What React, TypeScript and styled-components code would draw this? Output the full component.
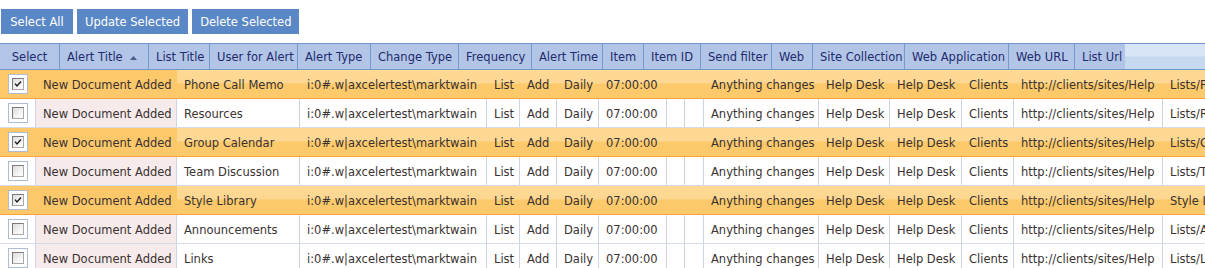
import React from 'react';
import styled, { createGlobalStyle } from 'styled-components';

const GlobalStyle = createGlobalStyle`
  html, body {
    margin: 0;
    padding: 0;
    background: #ffffff;
    overflow: hidden;
  }
  body {
    font-family: 'DejaVu Sans', Verdana, sans-serif;
    font-size: 11.5px;
  }
`;

const HEADER_COLUMNS = '60px 89px 61px 88px 73px 88px 73px 71px 41px 57px 71px 41px 92px 104px 66px 50px 1fr';
const BODY_COLUMNS = '36px 141px 123px 187px 33px 37px 42px 68px 18px 19px 115px 71px 72px 52px 149px 220px';

const Page = styled.div`
  width: 1205px;
  overflow: hidden;
`;

const Toolbar = styled.div`
  display: flex;
  gap: 4px;
  padding: 9px 0 0 1px;
  margin-bottom: 9px;
`;

const ActionButton = styled.button`
  height: 25px;
  min-width: 72px;
  padding: 0 8px;
  border: none;
  background: #5a88c6;
  color: #ffffff;
  font-family: inherit;
  font-size: 11.5px;
  cursor: pointer;
`;

const HeaderBar = styled.div`
  display: grid;
  grid-template-columns: ${HEADER_COLUMNS};
  height: 27px;
  box-sizing: border-box;
  border-top: 1px solid #7396c9;
  border-bottom: 1px solid #7396c9;
`;

const HeaderCell = styled.div<{ $center?: boolean; $last?: boolean }>`
  display: flex;
  align-items: center;
  justify-content: ${p => (p.$center ? 'center' : 'flex-start')};
  gap: 7px;
  padding: ${p => (p.$center ? '1px 0 0 0' : '1px 0 0 7px')};
  background: #b2c5e6;
  border-right: ${p => (p.$last ? 'none' : '1px solid #7698ca')};
  color: #1f2b6e;
  white-space: nowrap;
  overflow: hidden;
`;

const HeaderFiller = styled.div`
  background: linear-gradient(#d8e5f5 0, #d6e4f5 48%, #c7d9ef 52%, #c7d9ef 100%);
`;

const SortArrow = () => (
  <svg width="7" height="4" viewBox="0 0 7 4" style={{ marginTop: 2 }}>
    <polygon points="0,4 3.5,0 7,4" fill="#4c5c8c" />
  </svg>
);

const Cell = styled.div<{ $sorted?: boolean; $center?: boolean }>`
  display: flex;
  align-items: center;
  justify-content: ${p => (p.$center ? 'center' : 'flex-start')};
  padding: ${p => (p.$center ? '0' : '2px 0 0 7px')};
  border-right: 1px solid #cdd5e4;
  background: ${p => (p.$sorted ? '#f6eaea' : 'transparent')};
  white-space: nowrap;
  overflow: hidden;
`;

const Row = styled.div<{ $selected?: boolean }>`
  display: grid;
  grid-template-columns: ${BODY_COLUMNS};
  height: 29px;
  box-sizing: border-box;
  color: #3a3232;
  border-bottom: 1px solid ${p => (p.$selected ? '#f7a33d' : '#d5dce8')};
  background: ${p =>
    p.$selected
      ? 'linear-gradient(#fed994 0, #fed892 46%, #fdca6b 50%, #fdc96a 100%)'
      : '#ffffff'};

  ${Cell} {
    border-right-color: ${p => (p.$selected ? 'transparent' : '#cdd5e4')};
  }
  ${p =>
    p.$selected &&
    `
    & > div:nth-child(1), & > div:nth-child(2) {
      background: #fdc86a;
    }
  `}
`;

const CheckFrame = styled.span`
  display: flex;
  align-items: center;
  justify-content: center;
  width: 20px;
  height: 20px;
  box-sizing: border-box;
  border: 1px solid #aebbd2;
  background: #ffffff;
  margin-top: -1px;
`;

const CheckBox = styled.span`
  display: flex;
  align-items: center;
  justify-content: center;
  width: 12px;
  height: 12px;
  box-sizing: border-box;
  border: 1px solid #7a7a7a;
  border-right-color: #a9a9a9;
  border-bottom-color: #a9a9a9;
  background: linear-gradient(135deg, #dcdcdc 0%, #f4f4f4 60%, #ffffff 100%);
`;

const Check = ({ checked }: { checked: boolean }) => (
  <CheckFrame>
    <CheckBox>
      {checked && (
        <svg width="8" height="8" viewBox="0 0 8 8">
          <polyline points="1,3.6 3,6 7,1.5" fill="none" stroke="#1c1c1c" strokeWidth="1.4" />
        </svg>
      )}
    </CheckBox>
  </CheckFrame>
);

const headers = [
  'Select',
  'Alert Title',
  'List Title',
  'User for Alert',
  'Alert Type',
  'Change Type',
  'Frequency',
  'Alert Time',
  'Item',
  'Item ID',
  'Send filter',
  'Web',
  'Site Collection',
  'Web Application',
  'Web URL',
  'List Url',
];

interface AlertRow {
  checked: boolean;
  list: string;
  url: string;
}

const rows: AlertRow[] = [
  { checked: true, list: 'Phone Call Memo', url: 'Lists/PhoneCallMemo' },
  { checked: false, list: 'Resources', url: 'Lists/Resources' },
  { checked: true, list: 'Group Calendar', url: 'Lists/Calendar' },
  { checked: false, list: 'Team Discussion', url: 'Lists/Team Discussion' },
  { checked: true, list: 'Style Library', url: 'Style Library' },
  { checked: false, list: 'Announcements', url: 'Lists/Announcements' },
  { checked: false, list: 'Links', url: 'Lists/Links' },
];

export default function App() {
  return (
    <Page>
      <GlobalStyle />
      <Toolbar>
        <ActionButton>Select All</ActionButton>
        <ActionButton>Update Selected</ActionButton>
        <ActionButton>Delete Selected</ActionButton>
      </Toolbar>

      <HeaderBar>
        {headers.map((h, i) => (
          <HeaderCell key={h} $center={i === 0} $last={i === headers.length - 1}>
            {h}
            {h === 'Alert Title' && <SortArrow />}
          </HeaderCell>
        ))}
        <HeaderFiller />
      </HeaderBar>

      {rows.map(r => (
        <Row key={r.list} $selected={r.checked}>
          <Cell $center>
            <Check checked={r.checked} />
          </Cell>
          <Cell $sorted={!r.checked}>New Document Added</Cell>
          <Cell>{r.list}</Cell>
          <Cell>i:0#.w|axcelertest\marktwain</Cell>
          <Cell>List</Cell>
          <Cell>Add</Cell>
          <Cell>Daily</Cell>
          <Cell>07:00:00</Cell>
          <Cell />
          <Cell />
          <Cell>Anything changes</Cell>
          <Cell>Help Desk</Cell>
          <Cell>Help Desk</Cell>
          <Cell>Clients</Cell>
          <Cell>http://clients/sites/Help</Cell>
          <Cell>{r.url}</Cell>
        </Row>
      ))}
    </Page>
  );
}
